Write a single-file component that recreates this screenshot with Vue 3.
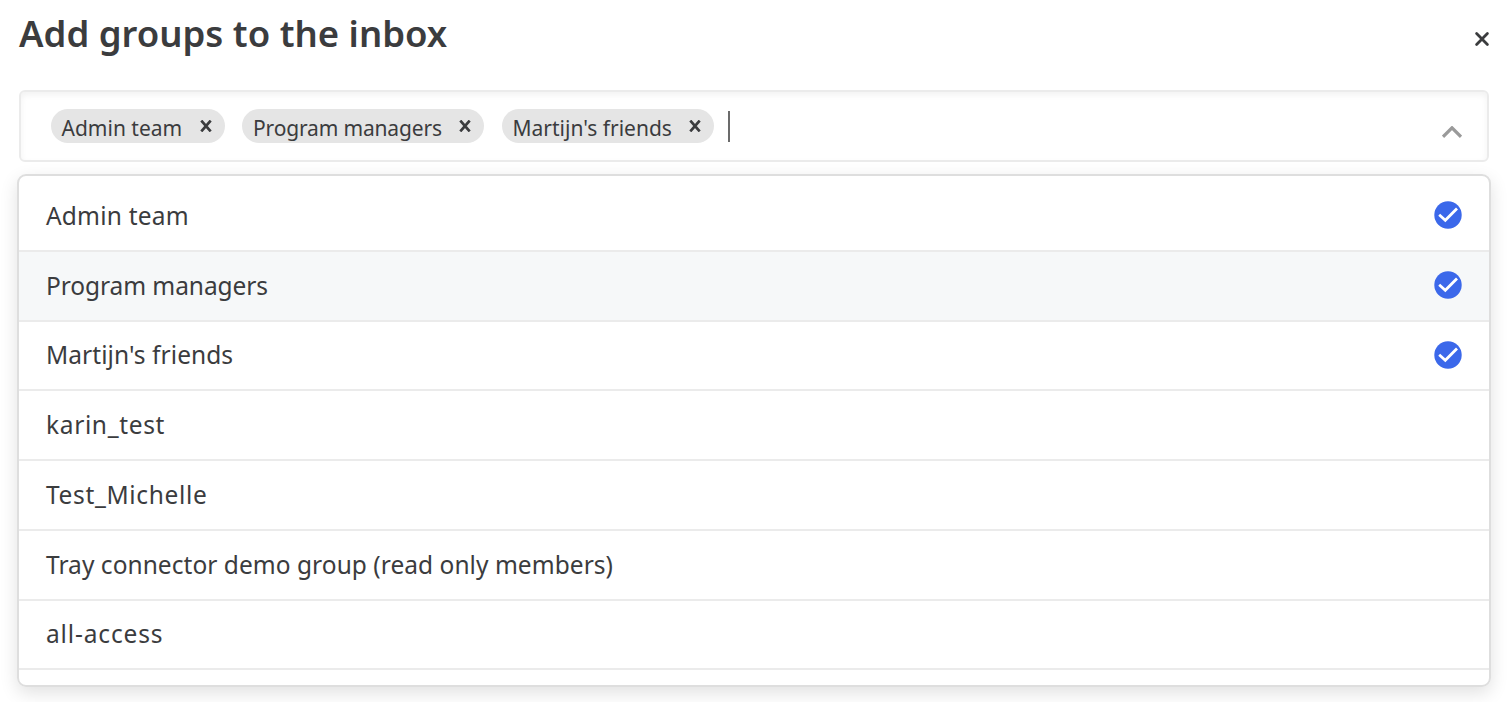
<script setup>
import { ref } from 'vue'

const groups = ref([
  { name: 'Admin team', selected: true, fit: 'admin' },
  { name: 'Program managers', selected: true, active: true, fit: 'program' },
  { name: "Martijn's friends", selected: true, fit: 'martijn' },
  { name: 'karin_test', fit: 'karin' },
  { name: 'Test_Michelle', fit: 'michelle' },
  { name: 'Tray connector demo group (read only members)', fit: 'tray' },
  { name: 'all-access', fit: 'access' },
])
</script>

<template>
  <main class="dialog">
    <header class="head">
      <h1>Add groups to the inbox</h1>
      <svg class="close" viewBox="0 0 16 16"><path d="M2.6 2.6 13.4 13.4M13.4 2.6 2.6 13.4" /></svg>
    </header>
    <div class="field">
      <span v-for="g in groups.slice(0, 3)" :key="g.name" class="chip" :class="'chip-' + g.fit">
        <span class="label">{{ g.name }}</span>
        <svg class="remove" viewBox="0 0 12 12"><path d="M1.3 0.6 10.7 11.4M10.7 0.6 1.3 11.4" /></svg>
      </span>
      <i class="caret"></i>
      <svg class="chevron" viewBox="0 0 20 12"><path d="M1 10.8 10 1.8 19 10.8" /></svg>
    </div>
    <ul class="menu">
      <li v-for="g in groups" :key="g.name" :class="{ active: g.active }">
        <span class="name" :class="'name-' + g.fit">{{ g.name }}</span>
        <svg v-if="g.selected" class="check" viewBox="0 0 28 28">
          <circle cx="14" cy="14" r="13.7" />
          <path d="M5.2 13.8 11.3 19.3 23 7.6" />
        </svg>
      </li>
    </ul>
  </main>
</template>

<style>
body { background: #fff; overflow: hidden; }
</style>

<style scoped>
.dialog {
  box-sizing: border-box;
  width: 1508px;
  height: 702px;
  padding: 0 17px 0 17px;
  overflow: hidden;
  font-family: "Noto Sans", "Open Sans", sans-serif;
  font-variant-ligatures: none;
  color: #3b3c3e;
}
.head { height: 90px; display: flex; justify-content: space-between; align-items: flex-start; }
h1 { margin: 11px 0 0 2px; font-size: 36.5px; line-height: 44px; font-weight: 600; white-space: nowrap; }
.close { width: 16px; height: 16px; margin: 31px 1px 0; fill: none; stroke: #3b3c3e; stroke-width: 2.8; stroke-linecap: round; }
.field {
  box-sizing: border-box;
  height: 72px;
  margin: 0 2px 0 1.5px;
  padding: 0 25px 0 30px;
  display: flex;
  align-items: center;
  border: 2px solid #ebebeb;
  border-radius: 6px;
  box-shadow: inset 0 3px 6px rgba(0, 0, 0, 0.055);
}
.chip {
  box-sizing: border-box;
  height: 34px;
  margin: 0 17.5px 0 0;
  padding: 0 13px 0 11px;
  display: flex;
  align-items: center;
  justify-content: space-between;
  border-radius: 17px;
  background: #e5e5e5;
  font-size: 21px;
}
.label { line-height: 32px; padding-top: 4px; white-space: nowrap; }
.chip-admin { width: 174px; }
.chip-program { width: 242px; letter-spacing: -0.16px; }
.chip-martijn { width: 212px; }
.remove { width: 12px; height: 12px; fill: none; stroke: #3b3c3e; stroke-width: 2.7; }
.caret { width: 2px; height: 31px; margin-left: -3px; background: #6b6b6b; }
.chevron { width: 20px; height: 12px; margin: 11px 0 0 auto; fill: none; stroke: #9a9a9a; stroke-width: 3.2; }
.menu {
  box-sizing: border-box;
  height: 513px;
  margin: 12px 0 0;
  padding: 6px 0 0;
  list-style: none;
  overflow: hidden;
  border: 2px solid #dedede;
  border-radius: 9px;
  box-shadow: 0 6px 18px rgba(0, 0, 0, 0.12);
}
li {
  box-sizing: border-box;
  height: 69.75px;
  padding: 0 27px;
  display: flex;
  align-items: center;
  justify-content: space-between;
  border-bottom: 2px solid #ebebeb;
}
.active { background: #f6f8f9; }
.name { font-size: 24.5px; line-height: 32px; white-space: nowrap; }
.name-admin { letter-spacing: 0.2px; }
.name-program { letter-spacing: -0.08px; }
.name-martijn { letter-spacing: 0.07px; }
.name-karin { letter-spacing: 0.65px; }
.name-michelle { letter-spacing: 0.65px; }
.name-tray { letter-spacing: 0.04px; }
.name-access { letter-spacing: 0.85px; }
.check { width: 28px; height: 28px; margin-bottom: 1px; }
.check circle { fill: #3b68ea; }
.check path { fill: none; stroke: #fff; stroke-width: 2.8; }
</style>
